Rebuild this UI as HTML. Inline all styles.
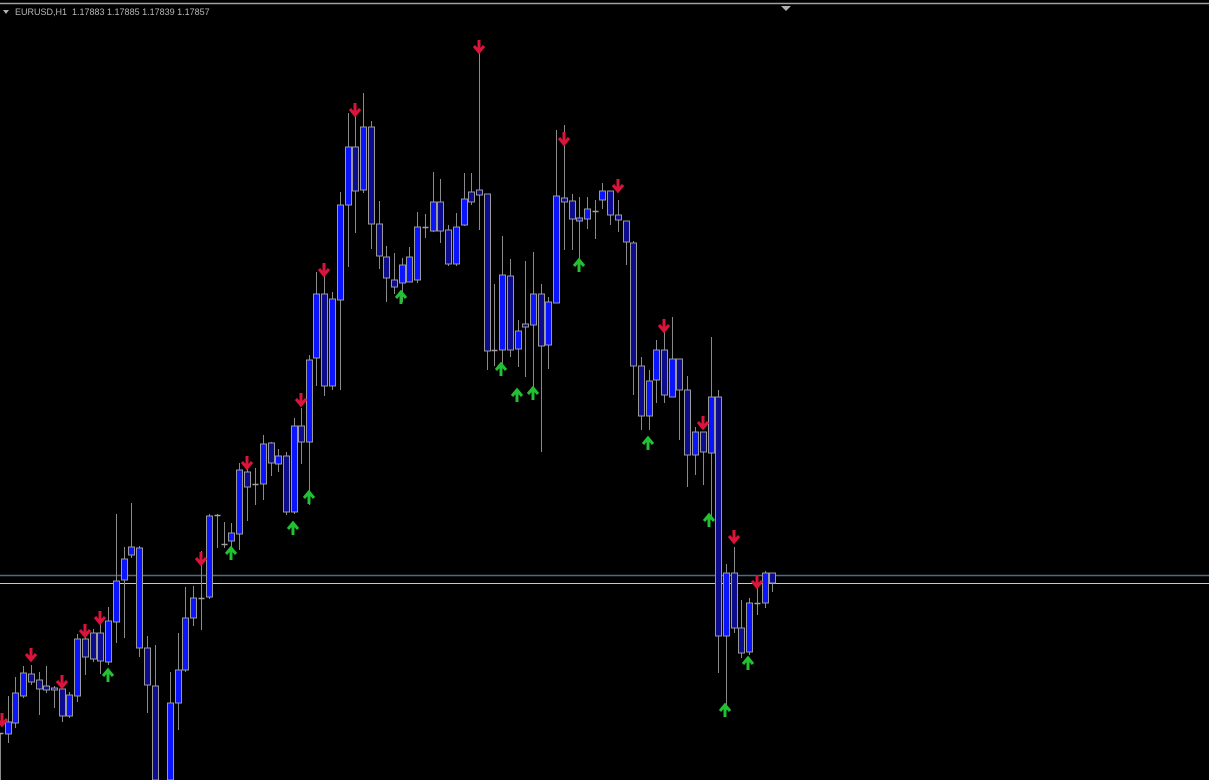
<!DOCTYPE html>
<html><head><meta charset="utf-8"><style>
html,body{margin:0;padding:0;background:#000;width:1209px;height:780px;overflow:hidden}
svg{display:block}
.t{position:absolute;left:15px;top:7px;font:9px "Liberation Sans",sans-serif;color:#b8b8b8;letter-spacing:0}
</style></head><body>
<svg id="s" width="1209" height="780" xmlns="http://www.w3.org/2000/svg">
<rect width="1209" height="780" fill="#000"/>
<line x1="0" y1="3.5" x2="1209" y2="3.5" stroke="#a0a0a0" stroke-width="1.5"/>
<polygon points="781,6 791,6 786,11" fill="#b0b0b0"/>
<polygon points="3,10 9,10 6,14" fill="#b0b0b0"/>
<line x1="0" y1="575.5" x2="1209" y2="575.5" stroke="#4c6a86" stroke-width="1.5"/>
<line x1="0" y1="583.5" x2="1209" y2="583.5" stroke="#c8c8c8" stroke-width="1"/>
<g id="g"></g>
</svg>
<div class="t">EURUSD,H1&nbsp; 1.17883 1.17885 1.17839 1.17857</div>
<script>
var C=[[0,733,780,733,734,'x'],[8,696,743,722,734,'b'],[15,677,728,693,723,'b'],[23,666,698,673,696,'b'],[31,665,685,674,682,'d'],[39,672,715,680,689,'d'],[46,666,693,686,690,'d'],[54,686,708,688,690,'d'],[62,678,722,689,716,'d'],[69,692,718,695,716,'b'],[77,634,702,639,696,'b'],[85,628,675,639,657,'d'],[93,629,662,633,659,'d'],[100,624,674,633,661,'d'],[108,607,665,621,662,'b'],[116,514,643,581,622,'b'],[124,547,638,559,580,'b'],[131,503,558,547,555,'b'],[139,546,657,548,648,'b'],[147,636,713,648,685,'d'],[155,645,780,686,780,'d'],[170,672,780,703,780,'b'],[178,633,730,670,703,'b'],[185,587,672,618,670,'b'],[193,586,626,598,618,'b'],[201,551,630,598,598,'x'],[209,514,599,516,597,'b'],[217,514,548,515,515,'x'],[224,522,548,544,544,'x'],[231,523,548,533,541,'b'],[239,463,550,470,534,'b'],[247,459,521,472,487,'d'],[255,468,505,484,484,'x'],[263,435,500,444,484,'b'],[271,442,476,443,463,'d'],[278,449,472,456,464,'b'],[286,452,515,456,512,'d'],[294,418,514,426,512,'b'],[301,408,464,426,442,'d'],[309,355,505,360,442,'b'],[316,272,386,294,358,'b'],[324,272,396,294,386,'d'],[332,292,390,299,386,'b'],[340,192,390,205,300,'b'],[348,113,267,147,205,'b'],[355,110,233,147,191,'d'],[363,93,193,127,190,'b'],[371,121,249,127,224,'d'],[379,201,269,224,256,'d'],[386,246,302,257,278,'d'],[394,253,294,280,287,'d'],[402,258,302,265,283,'b'],[409,247,282,257,282,'b'],[417,212,283,227,280,'b'],[425,214,238,227,227,'x'],[433,172,232,202,231,'b'],[440,179,243,202,231,'d'],[448,225,266,230,264,'d'],[456,213,266,227,264,'b'],[464,173,226,199,225,'b'],[471,173,205,192,202,'d'],[479,42,230,190,195,'d'],[487,194,370,194,351,'d'],[494,284,366,350,350,'x'],[502,236,365,275,350,'b'],[510,259,357,276,350,'d'],[518,320,367,331,349,'b'],[525,261,377,324,327,'d'],[533,252,395,294,325,'b'],[541,284,452,294,346,'d'],[548,297,369,302,345,'b'],[556,130,303,196,303,'b'],[564,125,250,198,202,'d'],[572,194,250,201,219,'d'],[579,197,262,218,221,'b'],[587,197,229,209,219,'b'],[595,200,239,211,211,'x'],[602,183,209,191,200,'b'],[610,192,225,191,215,'d'],[618,200,232,215,220,'d'],[626,221,265,221,242,'d'],[633,241,395,243,366,'d'],[641,357,430,366,416,'d'],[649,370,430,381,416,'b'],[656,340,403,350,380,'b'],[664,332,403,350,395,'d'],[672,317,397,359,397,'b'],[679,359,440,359,390,'d'],[687,376,487,390,455,'d'],[695,427,475,432,455,'b'],[703,432,485,432,452,'d'],[711,337,520,397,453,'b'],[718,390,673,397,636,'d'],[726,564,710,573,636,'b'],[734,547,633,573,628,'d'],[741,600,658,628,653,'d'],[749,598,655,603,652,'b'],[757,578,615,603,603,'x'],[765,571,608,573,603,'b'],[772,573,592,573,583,'d']];
var R=[[2,720],[31,655],[62,682],[85,631],[100,618],[201,559],[247,463],[301,400],[324,270],[355,110],[479,47],[564,139],[618,186],[664,326],[703,423],[734,537],[757,582]];
var G=[[108,675],[231,553],[293,528],[309,497],[401,297],[501,369],[517,395],[533,393],[579,265],[648,443],[709,520],[748,663],[725,710]];
var h='';
C.forEach(function(c){var x=c[0]+0.5;
h+='<line x1="'+x+'" y1="'+c[1]+'" x2="'+x+'" y2="'+c[2]+'" stroke="#8a8a8a" stroke-width="1"/>';
if(c[5]=='x'){h+='<line x1="'+(x-3)+'" y1="'+(c[3]+0.5)+'" x2="'+(x+3)+'" y2="'+(c[3]+0.5)+'" stroke="#a0a0a0" stroke-width="1.5"/>';}
else{var hh=Math.max(c[4]-c[3],2);h+='<rect x="'+(x-3)+'" y="'+c[3]+'" width="6" height="'+hh+'" fill="'+(c[5]=='b'?'#0a14ff':'#0c0c8c')+'" stroke="#9a9a9a" stroke-width="1"/>';}
});
R.forEach(function(a){var x=a[0],y=a[1];h+='<path d="M'+x+' '+(y-7)+'V'+(y+5)+'M'+(x-5)+' '+(y-1)+'L'+x+' '+(y+5)+'L'+(x+5)+' '+(y-1)+'" fill="none" stroke="#dc143c" stroke-width="3"/>';});
G.forEach(function(a){var x=a[0],y=a[1];h+='<path d="M'+x+' '+(y+7)+'V'+(y-5)+'M'+(x-5)+' '+(y+1)+'L'+x+' '+(y-5)+'L'+(x+5)+' '+(y+1)+'" fill="none" stroke="#22c032" stroke-width="3"/>';});
document.getElementById('g').innerHTML=h;
</script>
</body></html>
